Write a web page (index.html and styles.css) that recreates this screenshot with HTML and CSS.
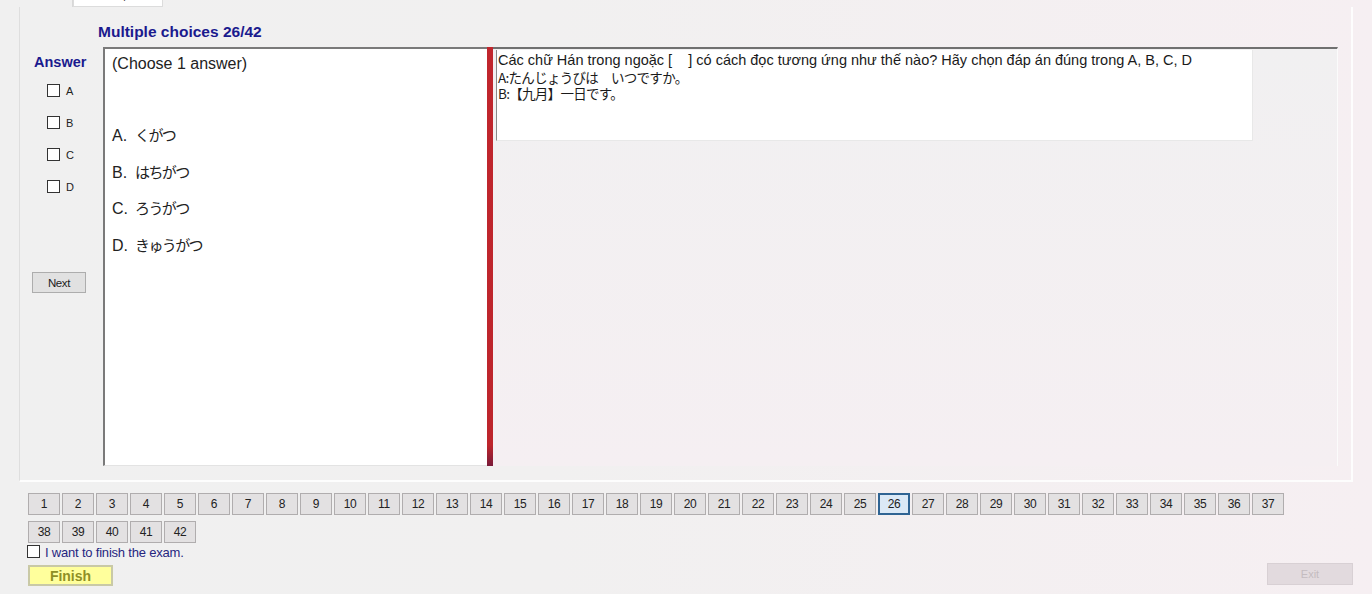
FILE: index.html
```html
<!DOCTYPE html>
<html lang="vi">
<head>
<meta charset="utf-8">
<title>Multiple choices</title>
<link rel="stylesheet" href="styles.css">
</head>
<body>
<div class="tabs">
  <div class="tab">Reading</div>
  <div class="tab tab-active">Multiple</div>
</div>
<div class="tabpage">
  <div class="title">Multiple choices 26/42</div>
  <div class="work">
    <div class="sidebar">
      <div class="answer-label">Answer</div>
      <div class="choice"><span class="box"></span><span>A</span></div>
      <div class="choice"><span class="box"></span><span>B</span></div>
      <div class="choice"><span class="box"></span><span>C</span></div>
      <div class="choice"><span class="box"></span><span>D</span></div>
      <button class="btn next">Next</button>
    </div>
    <div class="qpanel">
      <div class="hint">(Choose 1 answer)</div>
      <div class="options">
        <div class="opt"><span class="opt-key">A.</span><span class="jp">くがつ</span></div>
        <div class="opt"><span class="opt-key">B.</span><span class="jp">はちがつ</span></div>
        <div class="opt"><span class="opt-key">C.</span><span class="jp">ろうがつ</span></div>
        <div class="opt"><span class="opt-key">D.</span><span class="jp">きゅうがつ</span></div>
      </div>
    </div>
    <div class="splitter"></div>
    <div class="rpanel">
      <div class="qtext">
        <div class="qline">Các chữ Hán trong ngoặc [&nbsp;&nbsp;&nbsp;&nbsp;] có cách đọc tương ứng như thế nào? Hãy chọn đáp án đúng trong A, B, C, D</div>
        <div class="qline jp">A:たんじょうびは　いつですか。</div>
        <div class="qline jp">B:【九月】一日です。</div>
      </div>
    </div>
  </div>
</div>
<div class="nav">
  <button class="num">1</button><button class="num">2</button><button class="num">3</button><button class="num">4</button><button class="num">5</button><button class="num">6</button><button class="num">7</button><button class="num">8</button><button class="num">9</button><button class="num">10</button>
  <button class="num">11</button><button class="num">12</button><button class="num">13</button><button class="num">14</button><button class="num">15</button><button class="num">16</button><button class="num">17</button><button class="num">18</button><button class="num">19</button><button class="num">20</button>
  <button class="num">21</button><button class="num">22</button><button class="num">23</button><button class="num">24</button><button class="num">25</button><button class="num current">26</button><button class="num">27</button><button class="num">28</button><button class="num">29</button><button class="num">30</button>
  <button class="num">31</button><button class="num">32</button><button class="num">33</button><button class="num">34</button><button class="num">35</button><button class="num">36</button><button class="num">37</button><button class="num">38</button><button class="num">39</button><button class="num">40</button>
  <button class="num">41</button><button class="num">42</button>
</div>
<div class="finish-check"><span class="box"></span><span class="finish-label">I want to finish the exam.</span></div>
<div class="actions">
  <button class="btn finish">Finish</button>
  <button class="btn exit">Exit</button>
</div>
</body>
</html>
```
FILE: styles.css
```css
* { box-sizing: border-box; }
html, body { margin: 0; padding: 0; }
body {
  width: 1372px;
  height: 594px;
  overflow: hidden;
  font-family: "Liberation Sans", Arial, sans-serif;
  color: #111;
  background: linear-gradient(to right, #f0f0f0 0%, #f1f0f0 40%, #f6eff2 100%);
}
.jp { font-family: "Noto Sans CJK JP", "Liberation Sans", sans-serif; }

.tabs {
  display: flex;
  height: 7px;
  overflow: hidden;
  padding-left: 20px;
}
.tab {
  margin-top: -13px;
  height: 20px;
  width: 53px;
  font-size: 11px;
  line-height: 14px;
  padding-left: 8px;
  color: #444;
  border-right: 1px solid #d8d8d8;
}
.tab-active {
  width: 90px;
  background: #fff;
  padding-left: 26px;
  border: 1px solid #dcdcdc;
}

.tabpage {
  margin-left: 19px;
  width: 1334px;
  height: 475px;
  border-left: 1px solid #dedede;
  border-bottom: 2px solid #fdfdfd;
  border-right: 2px solid #fdfdfd;
  padding-top: 16px;
}
.title {
  padding-left: 78px;
  font-size: 15.5px;
  line-height: 18px;
  font-weight: bold;
  color: #1a1a8e;
}
.work {
  display: flex;
  margin-top: 6px;
  height: 419px;
}
.sidebar {
  width: 83px;
  padding-left: 14px;
  display: flex;
  flex-direction: column;
}
.answer-label {
  margin-top: 7px;
  font-size: 14.5px;
  line-height: 17px;
  font-weight: bold;
  color: #1a1a8e;
}
.choice {
  display: flex;
  align-items: center;
  gap: 6px;
  margin-left: 13px;
  height: 13px;
  font-size: 11px;
  color: #222;
}
.choice:nth-child(2) { margin-top: 13px; }
.choice + .choice { margin-top: 19px; }
.box {
  display: inline-block;
  width: 13px;
  height: 13px;
  border: 1px solid #333;
  background: #fff;
  flex: none;
}
.btn {
  font-family: "Liberation Sans", Arial, sans-serif;
  padding: 0;
  cursor: default;
}
.next {
  margin-top: 79px;
  margin-left: -2px;
  width: 54px;
  height: 21px;
  font-size: 11.5px;
  letter-spacing: -0.4px;
  color: #222;
  background: #e1e1e1;
  border: 1px solid #adadad;
}
.qpanel {
  width: 384px;
  background: #fff;
  border-top: 2px solid #7a7a7a;
  border-left: 2px solid #7a7a7a;
  border-bottom: 1px solid #e3e3e3;
  padding: 6px 0 0 7px;
  font-size: 16px;
  color: #222;
}
.hint { line-height: 18px; }
.options {
  margin-top: 53px;
  display: flex;
  flex-direction: column;
  gap: 18.5px;
}
.opt {
  display: flex;
  align-items: baseline;
  height: 18px;
  line-height: 18px;
}
.opt-key { width: 23px; }
.opt .jp {
  font-size: 15px;
  letter-spacing: -1.6px;
  line-height: 18px;
}
.splitter {
  width: 6px;
  background: linear-gradient(to bottom, #c0262d 0%, #bd252c 95%, #7a1b3a 100%);
}
.rpanel {
  width: 845px;
  border-top: 2px solid #707070;
  border-right: 1px solid #fbfbfb;
  padding: 1px 0 0 3px;
  background: linear-gradient(to bottom, #f1f0f1, #f5eff2);
}
.qtext {
  width: 757px;
  height: 91px;
  background: #fff;
  border-left: 1px solid #8a8a8a;
  border-right: 1px solid #e8e8e8;
  border-bottom: 1px solid #e8e8e8;
  padding: 2px 0 0 1px;
  font-size: 14.5px;
  color: #1a1a1a;
}
.qline {
  height: 16.5px;
  line-height: 16.5px;
  white-space: nowrap;
}
.qline.jp {
  font-size: 13.5px;
  letter-spacing: -0.7px;
}

.nav {
  margin: 11px 0 0 28px;
  width: 1258px;
  display: flex;
  flex-wrap: wrap;
  gap: 6px 2px;
}
.num {
  width: 32px;
  height: 22px;
  padding: 0;
  font-family: "Liberation Sans", Arial, sans-serif;
  font-size: 12px;
  letter-spacing: -0.3px;
  color: #222;
  background: #e3e1e2;
  border: 1px solid #b0adae;
}
.num.current {
  border: 2px solid #2f6493;
  background: #dbe9f6;
}
.finish-check {
  display: flex;
  align-items: center;
  gap: 5px;
  margin: 1px 0 0 27px;
  height: 14px;
}
.finish-label {
  font-size: 13px;
  color: #262680;
  letter-spacing: -0.2px;
  margin-top: 3px;
}
.actions {
  display: flex;
  justify-content: space-between;
  align-items: flex-end;
  margin: 5px 0 0 28px;
  width: 1325px;
}
.finish {
  width: 85px;
  height: 21px;
  font-size: 14px;
  font-weight: bold;
  color: #8f8f25;
  background: #ffff9c;
  border: 2px solid #c9c9a6;
}
.exit {
  width: 86px;
  height: 22px;
  font-size: 11px;
  color: #c4bcc0;
  background: #e2dade;
  border: 1px solid #d8d0d4;
  margin-bottom: 1px;
}
```
